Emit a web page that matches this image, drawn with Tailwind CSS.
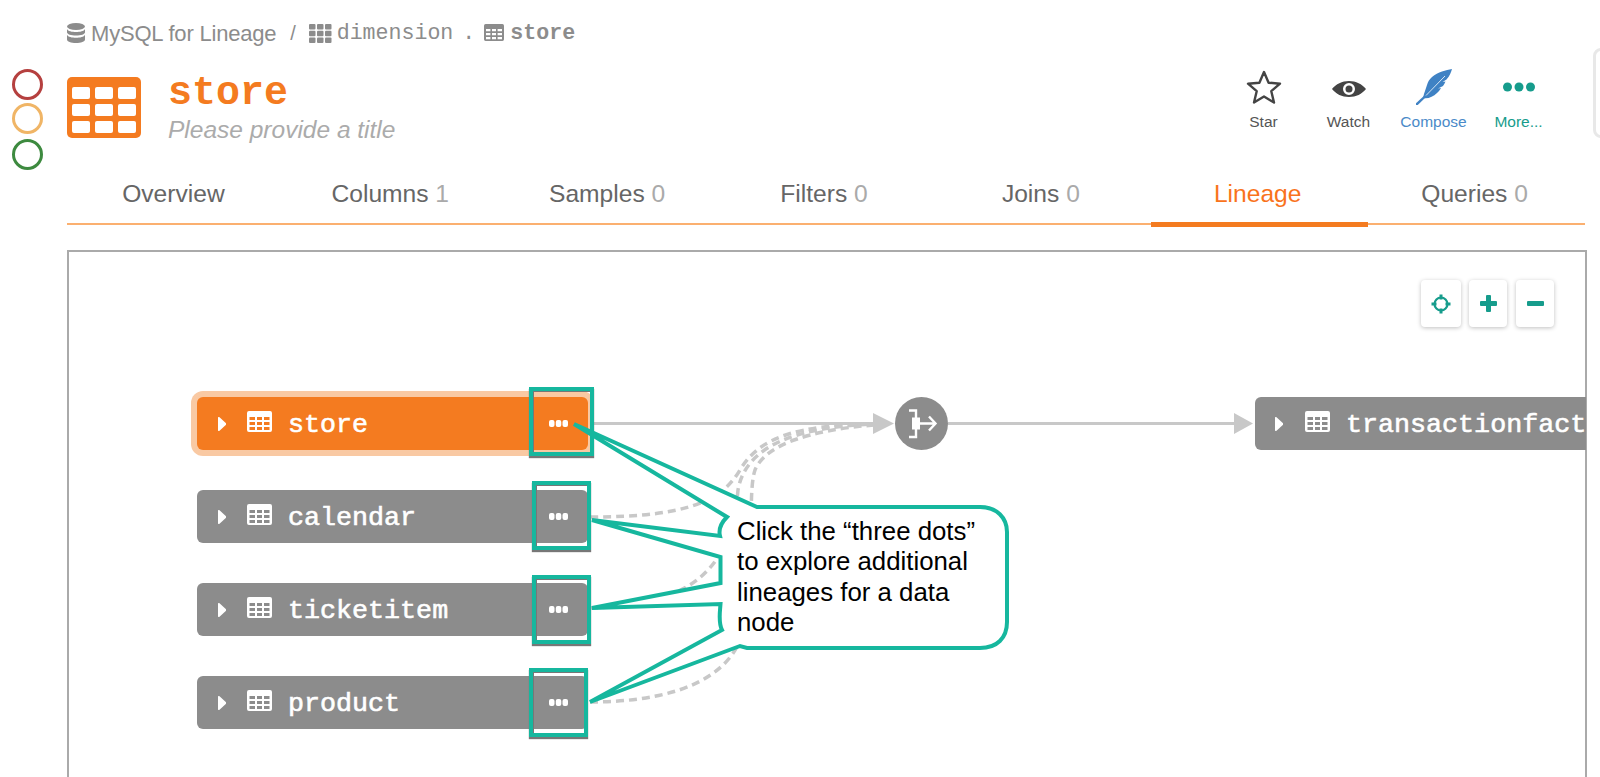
<!DOCTYPE html>
<html lang="en">
<head>
  <meta charset="UTF-8">
  <title>store - Lineage</title>
  <script src="https://cdn.jsdelivr.net/npm/@tailwindcss/browser@4"></script>
</head>
<body class="bg-white">
  <svg class="hidden">
    <defs>
      <symbol id="tbl" viewBox="0 0 25 21">
        <path fill="currentColor" fill-rule="evenodd" d="M2 0h21a2 2 0 0 1 2 2v17a2 2 0 0 1-2 2H2a2 2 0 0 1-2-2V2a2 2 0 0 1 2-2zM2.500 6v3h5.500V6zM10 6v3h5V6zM17 6v3h5.500V6zM2.500 11v3h5.500v-3zM10 11v3h5v-3zM17 11v3h5.500v-3zM2.500 16v3h5.500v-3zM10 16v3h5v-3zM17 16v3h5.500v-3z"/>
      </symbol>
    </defs>
  </svg>

  <div class="relative w-[1600px] h-[777px] overflow-hidden bg-white font-['Liberation_Sans',sans-serif]">
    <!-- markers on the left -->
    <div class="absolute left-[12px] top-[69px] w-[31px] h-[31px] rounded-full border-[3px] border-[#b5403f]"></div>
    <div class="absolute left-[12px] top-[103px] w-[31px] h-[31px] rounded-full border-[3px] border-[#f0b566]"></div>
    <div class="absolute left-[12px] top-[139px] w-[31px] h-[31px] rounded-full border-[3px] border-[#3d8a3f]"></div>

    <!-- other panel peeking in -->
    <div class="absolute left-[1593px] top-[48px] w-[40px] h-[90px] rounded-lg border-[3px] border-[#e8e8e8]"></div>

    <div class="pl-[67px] pr-[13px] h-full flex flex-col">
      <!-- breadcrumb -->
      <div class="mt-[20px] h-[26px] flex items-center text-[#8c8c8c] text-[22px] tracking-[-0.2px]">
        <svg class="w-[18px] h-[20px] mr-[6px]" viewBox="0 0 18 20" fill="#8c8c8c">
          <ellipse cx="9" cy="3.500" rx="9" ry="3.500"/>
          <path d="M0 6c1 2.200 5 3 9 3s8-.8 9-3v3.200C18 11.200 14 12.500 9 12.500S0 11.200 0 9.200z"/>
          <path d="M0 11.800c1 2.200 5 3 9 3s8-.8 9-3V16.500C18 18.500 14 20 9 20s-9-1.500-9-3.500z"/>
        </svg>
        <span>MySQL for Lineage</span>
        <span class="ml-[14px] text-[20px]">/</span>
        <svg class="w-[23px] h-[19px] ml-[13px]" viewBox="0 0 23 19" fill="#8c8c8c">
          <rect width="6.500" height="5.500" rx="1"/><rect x="8" width="6.500" height="5.500" rx="1"/><rect x="16" width="6.500" height="5.500" rx="1"/>
          <rect y="6.800" width="6.500" height="5.500" rx="1"/><rect x="8" y="6.800" width="6.500" height="5.500" rx="1"/><rect x="16" y="6.800" width="6.500" height="5.500" rx="1"/>
          <rect y="13.500" width="6.500" height="5.500" rx="1"/><rect x="8" y="13.500" width="6.500" height="5.500" rx="1"/><rect x="16" y="13.500" width="6.500" height="5.500" rx="1"/>
        </svg>
        <span class="ml-[5px] mt-[1px] font-['Liberation_Mono',monospace] text-[21.600px] tracking-normal">dimension</span>
        <span class="ml-[9px] mt-[1px] font-['Liberation_Mono',monospace] text-[21.600px] tracking-normal">.</span>
        <svg class="w-[20px] h-[17px] ml-[9px] -mt-[2px] text-[#8c8c8c]"><use href="#tbl"/></svg>
        <span class="ml-[6px] mt-[1px] font-['Liberation_Mono',monospace] font-bold text-[21.600px] tracking-normal">store</span>
      </div>

      <!-- title row -->
      <div class="mt-[31px] h-[61px] flex items-start">
        <svg class="w-[74px] h-[61px] shrink-0" viewBox="0 0 74 61">
          <rect width="74" height="61" rx="5" fill="#f47b20"/>
          <g fill="#fff">
            <rect x="5" y="10" width="18" height="12" rx="2"/><rect x="28" y="10" width="18" height="12" rx="2"/><rect x="51" y="10" width="18" height="12" rx="2"/>
            <rect x="5" y="27" width="18" height="12" rx="2"/><rect x="28" y="27" width="18" height="12" rx="2"/><rect x="51" y="27" width="18" height="12" rx="2"/>
            <rect x="5" y="44" width="18" height="12" rx="2"/><rect x="28" y="44" width="18" height="12" rx="2"/><rect x="51" y="44" width="18" height="12" rx="2"/>
          </g>
        </svg>
        <div class="ml-[27px]">
          <div class="font-['Liberation_Mono',monospace] font-bold text-[40px] leading-[36px] -mt-[1px] text-[#f47b20]">store</div>
          <div class="mt-[3px] italic text-[24.500px] leading-[30px] text-[#ababab]">Please provide a title</div>
        </div>

        <div class="ml-auto mr-[26px] -mt-[8px] flex text-[15.500px] leading-[18px]">
          <div class="w-[85px] flex flex-col items-center text-[#555]">
            <svg class="w-[36px] h-[36px]" viewBox="0 0 36 36"><path d="M18 3l4.600 10.700 11.400 1-8.700 7.500 2.700 11.300L18 27.500 8 33.500l2.700-11.300L2 14.700l11.400-1z" fill="none" stroke="#444" stroke-width="2.400" stroke-linejoin="round"/></svg>
            <span class="mt-[8px]">Star</span>
          </div>
          <div class="w-[85px] flex flex-col items-center text-[#555]">
            <svg class="w-[36px] h-[36px]" viewBox="0 0 36 36"><path fill-rule="evenodd" d="M1 20c4-5 10-8 17-8s13 3 17 8c-4 5-10 8-17 8S5 25 1 20zM18 14a6 6 0 1 0 0 12 6 6 0 0 0 0-12z" fill="#444"/><circle cx="18" cy="20" r="3.500" fill="#444"/></svg>
            <span class="mt-[8px]">Watch</span>
          </div>
          <div class="w-[85px] flex flex-col items-center text-[#4a8ac8]">
            <svg class="w-[36px] h-[36px]" viewBox="0 0 36 36"><path d="M36 0C30 1 22 3 16 8c-3 2.500-4 5-5 8-1 3-2 6-3 9l-1 4c5 1 10-1 14-5 2-2 3-3 4-5l-3 .5 5-2.500c1-1.500 2-3 2.500-4.500l-3 .5 4-2.500C34 7 35 3 36 0z" fill="#3f82c4"/><path d="M0 36l10-9.500" stroke="#3f82c4" stroke-width="2.400"/><path d="M10 26.500L29 7" stroke="#fff" stroke-width="0.800" fill="none"/></svg>
            <span class="mt-[8px]">Compose</span>
          </div>
          <div class="w-[85px] flex flex-col items-center text-[#169c8c]">
            <svg class="w-[36px] h-[36px]" viewBox="0 0 36 36" fill="#169c8c"><circle cx="6.500" cy="18" r="4.500"/><circle cx="18" cy="18" r="4.500"/><circle cx="29.500" cy="18" r="4.500"/></svg>
            <span class="mt-[8px]">More...</span>
          </div>
        </div>
      </div>

      <!-- tabs -->
      <div class="mt-[34px] w-[1518px] grid grid-cols-7 border-b-2 border-[#fbb070] text-[24.600px] text-[#666]">
        <div class="h-[51px] pt-[4px] pr-[4px] text-center">Overview</div>
        <div class="h-[51px] pt-[4px] pr-[4px] text-center">Columns <span class="text-[#aaa]">1</span></div>
        <div class="h-[51px] pt-[4px] pr-[4px] text-center">Samples <span class="text-[#aaa]">0</span></div>
        <div class="h-[51px] pt-[4px] pr-[4px] text-center">Filters <span class="text-[#aaa]">0</span></div>
        <div class="h-[51px] pt-[4px] pr-[4px] text-center">Joins <span class="text-[#aaa]">0</span></div>
        <div class="h-[55px] -mb-[4px] pt-[4px] pr-[4px] text-center text-[#f9731c] border-b-[5px] border-[#f47b20]">Lineage</div>
        <div class="h-[51px] pt-[4px] pr-[4px] text-center">Queries <span class="text-[#aaa]">0</span></div>
      </div>

      <!-- lineage canvas frame -->
      <div class="mt-[25px] flex-1 w-[1520px] border-2 border-b-0 border-[#aaa]"></div>
    </div>

    <!-- zoom controls -->
    <div class="absolute left-[1421px] top-[280px] flex">
      <button class="w-[40px] h-[47px] bg-white rounded shadow-[0_1px_4px_rgba(0,0,0,0.25)] flex items-center justify-center">
        <svg class="w-[20px] h-[20px]" viewBox="0 0 20 20" fill="none" stroke="#169c8c" stroke-width="2.200"><circle cx="10" cy="10" r="6.500"/><path d="M10 0.500v5M10 14.500v5M0.500 10h5M14.500 10h5" stroke-width="3"/></svg>
      </button>
      <button class="ml-[8px] w-[38px] h-[47px] bg-white rounded shadow-[0_1px_4px_rgba(0,0,0,0.25)] flex items-center justify-center">
        <svg class="w-[17px] h-[17px]" viewBox="0 0 17 17" fill="#169c8c"><rect y="6" width="17" height="5" rx="1"/><rect x="6" width="5" height="17" rx="1"/></svg>
      </button>
      <button class="ml-[9px] w-[38px] h-[47px] bg-white rounded shadow-[0_1px_4px_rgba(0,0,0,0.25)] flex items-center justify-center">
        <svg class="w-[17px] h-[5px]" viewBox="0 0 17 5" fill="#169c8c"><rect width="17" height="5" rx="1"/></svg>
      </button>
    </div>

    <!-- edges -->
    <svg class="absolute left-0 top-0 w-[1600px] h-[777px]" viewBox="0 0 1600 777" fill="none">
      <path d="M590 423.500H876M948 423.500H1236" stroke="#c8c8c8" stroke-width="3"/>
      <g stroke="#c8c8c8" stroke-width="3.500" stroke-dasharray="8 5">
        <path d="M590 517C690 517 722 500 740 470C760 436 800 425 874 424"/>
        <path d="M590 608C680 605 730 580 738 490C746 444 800 427 874 424"/>
        <path d="M590 702C650 702 715 690 738 645S745 500 755 470C765 445 810 430 874 425"/>
      </g>
      <path d="M894 423.500L873 413V434zM1253 423.500L1234 413V434z" fill="#c8c8c8"/>
      <circle cx="921.500" cy="423.500" r="26.500" fill="#8c8c8c"/>
      <path d="M909 410.500h7v8M916 429v8h-7" stroke="#fff" stroke-width="2.400"/>
      <rect x="912" y="417.500" width="8" height="12" fill="#fff"/>
      <path d="M920 423.500h15M929 416.500l6.500 7-6.500 7" stroke="#fff" stroke-width="2.400"/>
    </svg>

    <!-- nodes -->
    <div class="absolute left-[191px] top-[391px] w-[403px] h-[65px] rounded-xl bg-[#f9c9a3]"></div>
    <div class="absolute left-[197px] top-[397px] w-[391px] h-[53px] rounded-md bg-[#f47b20] text-white flex items-center pl-[21px]">
      <svg class="w-[8px] h-[14px]" viewBox="0 0 8 14" fill="#fff"><path d="M0 1a1 1 0 0 1 1.500-.8l6 5.500a1.700 1.700 0 0 1 0 2.600l-6 5.500A1 1 0 0 1 0 13z"/></svg>
      <svg class="w-[25px] h-[21px] ml-[21px] -mt-[4px]"><use href="#tbl"/></svg>
      <span class="ml-[16px] mt-[3px] font-['Liberation_Mono',monospace] text-[26.700px] [-webkit-text-stroke:0.6px_white]">store</span>
      <svg class="absolute left-[352px] top-[23px] w-[19px] h-[7px]" viewBox="0 0 19 7" fill="#fff"><rect width="5.500" height="7" rx="2"/><rect x="6.800" width="5.500" height="7" rx="2"/><rect x="13.500" width="5.500" height="7" rx="2"/></svg>
    </div>
    <div class="absolute left-[197px] top-[490px] w-[391px] h-[53px] rounded-md bg-[#8c8c8c] text-white flex items-center pl-[21px]">
      <svg class="w-[8px] h-[14px]" viewBox="0 0 8 14" fill="#fff"><path d="M0 1a1 1 0 0 1 1.500-.8l6 5.500a1.700 1.700 0 0 1 0 2.600l-6 5.500A1 1 0 0 1 0 13z"/></svg>
      <svg class="w-[25px] h-[21px] ml-[21px] -mt-[4px]"><use href="#tbl"/></svg>
      <span class="ml-[16px] mt-[3px] font-['Liberation_Mono',monospace] text-[26.700px] [-webkit-text-stroke:0.6px_white]">calendar</span>
      <svg class="absolute left-[352px] top-[23px] w-[19px] h-[7px]" viewBox="0 0 19 7" fill="#fff"><rect width="5.500" height="7" rx="2"/><rect x="6.800" width="5.500" height="7" rx="2"/><rect x="13.500" width="5.500" height="7" rx="2"/></svg>
    </div>
    <div class="absolute left-[197px] top-[583px] w-[391px] h-[53px] rounded-md bg-[#8c8c8c] text-white flex items-center pl-[21px]">
      <svg class="w-[8px] h-[14px]" viewBox="0 0 8 14" fill="#fff"><path d="M0 1a1 1 0 0 1 1.500-.8l6 5.500a1.700 1.700 0 0 1 0 2.600l-6 5.500A1 1 0 0 1 0 13z"/></svg>
      <svg class="w-[25px] h-[21px] ml-[21px] -mt-[4px]"><use href="#tbl"/></svg>
      <span class="ml-[16px] mt-[3px] font-['Liberation_Mono',monospace] text-[26.700px] [-webkit-text-stroke:0.6px_white]">ticketitem</span>
      <svg class="absolute left-[352px] top-[23px] w-[19px] h-[7px]" viewBox="0 0 19 7" fill="#fff"><rect width="5.500" height="7" rx="2"/><rect x="6.800" width="5.500" height="7" rx="2"/><rect x="13.500" width="5.500" height="7" rx="2"/></svg>
    </div>
    <div class="absolute left-[197px] top-[676px] w-[391px] h-[53px] rounded-md bg-[#8c8c8c] text-white flex items-center pl-[21px]">
      <svg class="w-[8px] h-[14px]" viewBox="0 0 8 14" fill="#fff"><path d="M0 1a1 1 0 0 1 1.500-.8l6 5.500a1.700 1.700 0 0 1 0 2.600l-6 5.500A1 1 0 0 1 0 13z"/></svg>
      <svg class="w-[25px] h-[21px] ml-[21px] -mt-[4px]"><use href="#tbl"/></svg>
      <span class="ml-[16px] mt-[3px] font-['Liberation_Mono',monospace] text-[26.700px] [-webkit-text-stroke:0.6px_white]">product</span>
      <svg class="absolute left-[352px] top-[23px] w-[19px] h-[7px]" viewBox="0 0 19 7" fill="#fff"><rect width="5.500" height="7" rx="2"/><rect x="6.800" width="5.500" height="7" rx="2"/><rect x="13.500" width="5.500" height="7" rx="2"/></svg>
    </div>
    <div class="absolute left-[1255px] top-[397px] w-[331px] h-[53px] rounded-l-md bg-[#8c8c8c] text-white flex items-center pl-[20px] overflow-hidden">
      <svg class="w-[8px] h-[14px] shrink-0" viewBox="0 0 8 14" fill="#fff"><path d="M0 1a1 1 0 0 1 1.500-.8l6 5.500a1.700 1.700 0 0 1 0 2.600l-6 5.500A1 1 0 0 1 0 13z"/></svg>
      <svg class="w-[25px] h-[21px] ml-[22px] -mt-[4px] shrink-0"><use href="#tbl"/></svg>
      <span class="ml-[16px] mt-[3px] font-['Liberation_Mono',monospace] text-[26.700px] [-webkit-text-stroke:0.6px_white]">transactionfact</span>
    </div>

    <!-- highlight boxes around the three dots -->
    <div class="absolute left-[529px] top-[387px] w-[65px] h-[69px] border-4 border-[#16b79e] shadow-[0_2px_1px_#777,inset_1px_1px_0_#777]"></div>
    <div class="absolute left-[532px] top-[481px] w-[59px] h-[69px] border-4 border-[#16b79e] shadow-[0_2px_1px_#777,inset_1px_1px_0_#777]"></div>
    <div class="absolute left-[532px] top-[575px] w-[59px] h-[69px] border-4 border-[#16b79e] shadow-[0_2px_1px_#777,inset_1px_1px_0_#777]"></div>
    <div class="absolute left-[529px] top-[668px] w-[59px] h-[69px] border-4 border-[#16b79e] shadow-[0_2px_1px_#777,inset_1px_1px_0_#777]"></div>

    <!-- callout -->
    <svg class="absolute left-0 top-0 w-[1600px] h-[777px]" viewBox="0 0 1600 777">
      <path d="M574 424L757 507H980C997 507 1007 518 1007 532V622C1007 638 997 648 980 648H747L740 646L590 702L722 630C718 622 720 612 720.500 604L592 608L720.500 583V557L592 520L720 536C718 528 722 522 727 517z" fill="#fff" stroke="#16b79e" stroke-width="4" stroke-linejoin="miter"/>
    </svg>
    <div class="absolute left-[737px] top-[516px] w-[262px] text-[25.800px] leading-[30.300px] text-black">Click the “three dots” to explore additional lineages for a data node</div>
  </div>
</body>
</html>
